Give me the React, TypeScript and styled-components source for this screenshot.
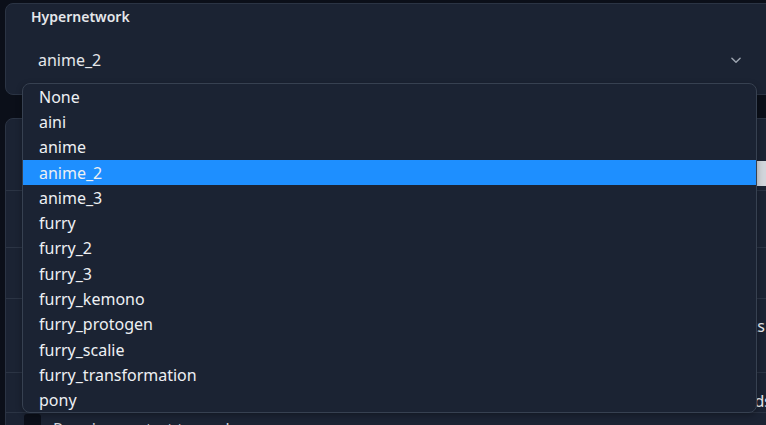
import React from "react";
import styled, { createGlobalStyle } from "styled-components";

const Global = createGlobalStyle`
  html, body { margin: 0; padding: 0; background: #0b0f19; overflow: hidden; }
  body { font-family: "Noto Sans", "Open Sans", sans-serif; color: #e5e7eb; }
  #root { width: 766px; height: 425px; overflow: hidden; position: relative; }
`;

const Page = styled.div`
  position: relative;
  width: 766px;
  height: 425px;
  padding: 3px 0 0 5px;
  box-sizing: border-box;
  display: flex;
  flex-direction: column;
  gap: 23px;
`;

const Block = styled.div`
  width: 790px;
  height: 92px;
  flex: none;
  box-sizing: border-box;
  background: #1b2333;
  border: 1px solid #2b3444;
  border-radius: 8px;
  padding: 4px 0 0 25px;
  display: flex;
  flex-direction: column;
`;

const Label = styled.div`
  font-size: 14px;
  font-weight: 600;
  color: #e5e7eb;
  line-height: 18px;
`;

const Field = styled.div`
  margin-top: 25px;
  width: 705px;
  display: flex;
  align-items: center;
  justify-content: space-between;
  padding-left: 7px;
  font-size: 16px;
  line-height: 18px;
`;

const Chevron = styled.svg`
  width: 14px;
  height: 14px;
  color: #9ca3af;
`;

const Panel = styled.div`
  width: 790px;
  height: 330px;
  flex: none;
  box-sizing: border-box;
  background: #1b2333;
  border: 1px solid #2b3444;
  border-radius: 8px;
  display: flex;
  flex-direction: column;
`;

const Row = styled.div<{ $h: number; $pt?: number; $pr?: number }>`
  height: ${(p) => p.$h}px;
  flex: none;
  box-sizing: border-box;
  border-bottom: 1px solid #2b3444;
  display: flex;
  align-items: flex-start;
  justify-content: flex-end;
  padding: ${(p) => p.$pt ?? 0}px ${(p) => p.$pr ?? 22}px 0 0;
  font-size: 16px;
  line-height: 18px;
  white-space: nowrap;
`;

const Track = styled.div`
  width: 60px;
  height: 25px;
  background: #d1d5db;
  border-radius: 2px;
  margin-right: -20px;
`;

const Hint = styled.div`
  padding: 7px 0 0 47px;
  font-size: 16px;
  line-height: 18px;
  color: #d1d5db;
  white-space: nowrap;
  display: flex;
  align-items: flex-start;
  gap: 12px;
`;

const Box = styled.span`
  width: 17px;
  height: 16px;
  background: #0b0f19;
  border-radius: 3px;
  margin: -6px 0 0 -29px;
`;

const Menu = styled.ul`
  position: absolute;
  left: 22px;
  top: 83px;
  width: 735px;
  height: 330px;
  box-sizing: border-box;
  margin: 0;
  padding: 0;
  list-style: none;
  background: #1b2333;
  border: 1px solid #374151;
  border-radius: 8px;
  overflow: hidden;
  box-shadow: 0 2px 6px rgba(0, 0, 0, 0.3);
`;

const Item = styled.li<{ $active?: boolean }>`
  height: 25.3px;
  display: flex;
  align-items: center;
  padding-left: 16px;
  font-size: 16px;
  color: #eef0f3;
  background: ${(p) => (p.$active ? "#1e8fff" : "transparent")};
`;

const items = [
  "None",
  "aini",
  "anime",
  "anime_2",
  "anime_3",
  "furry",
  "furry_2",
  "furry_3",
  "furry_kemono",
  "furry_protogen",
  "furry_scalie",
  "furry_transformation",
  "pony",
];

export default function App() {
  return (
    <>
      <Global />
      <Page>
        <Block>
          <Label>Hypernetwork</Label>
          <Field>
            <span>anime_2</span>
            <Chevron viewBox="0 0 24 24" fill="none" stroke="currentColor" strokeWidth="2.5" strokeLinecap="round" strokeLinejoin="round">
              <path d="M5 9l7 7 7-7" />
            </Chevron>
          </Field>
        </Block>
        <Panel>
          <Row $h={72} $pt={42}>
            <Track />
          </Row>
          <Row $h={57} />
          <Row $h={51} />
          <Row $h={74} $pt={18} $pr={29}>
            Hypernetworks
          </Row>
          <Row $h={40} $pt={19}>
            seeds
          </Row>
          <Hint>
            <Box />
            Requires restart to apply
          </Hint>
        </Panel>
        <Menu>
          {items.map((it) => (
            <Item key={it} $active={it === "anime_2"}>
              {it}
            </Item>
          ))}
        </Menu>
      </Page>
    </>
  );
}
